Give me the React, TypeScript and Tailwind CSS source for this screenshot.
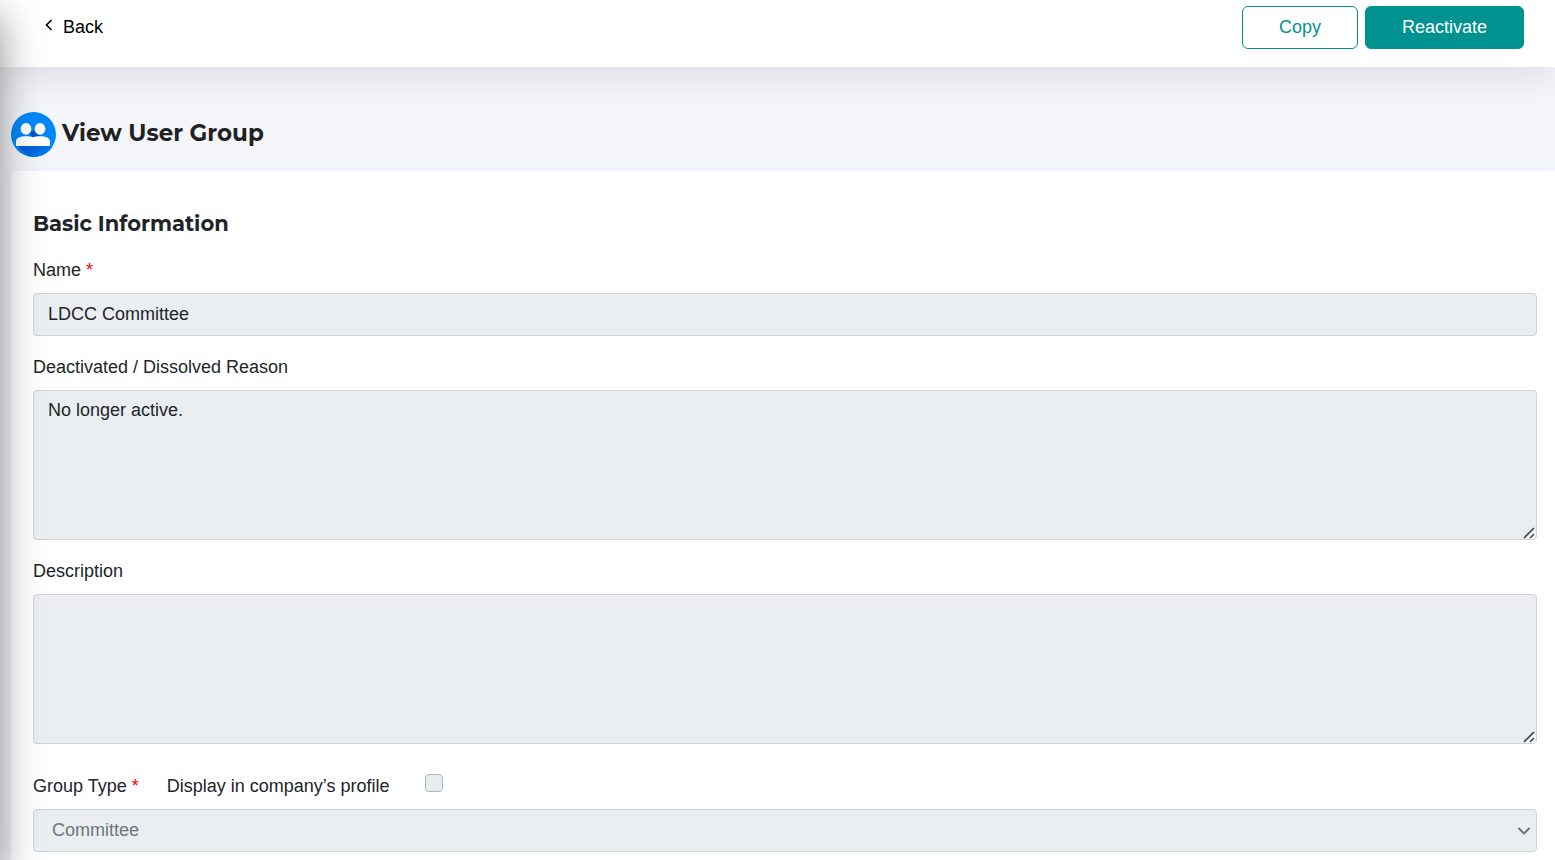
import type { ReactNode } from "react";

interface UserGroup {
  name: string;
  deactivatedReason: string;
  description: string;
  groupType: string;
  displayInProfile: boolean;
}

const group: UserGroup = {
  name: "LDCC Committee",
  deactivatedReason: "No longer active.",
  description: "",
  groupType: "Committee",
  displayInProfile: false,
};

const fieldClass =
  "block w-full rounded-[4px] border border-[#ced4da] bg-[#eaeef1] px-[14px] text-[18px] leading-[27px] text-[#212529] outline-none";

function UserGroupIcon() {
  return (
    <svg viewBox="0 0 45 45" className="size-[45px] shrink-0" aria-hidden="true">
      <defs>
        <clipPath id="badge">
          <circle cx="22.5" cy="22.5" r="22.5" />
        </clipPath>
        <linearGradient id="cast" x1="0" y1="0" x2="1" y2="0.6">
          <stop offset="0" stopColor="#0060d8" />
          <stop offset="0.4" stopColor="#0060d8" />
          <stop offset="1" stopColor="#0088fb" />
        </linearGradient>
      </defs>
      <g clipPath="url(#badge)">
        <rect width="45" height="45" fill="#0088fb" />
        <path d="M5.500 33.500H39l4 4v9H20z" fill="url(#cast)" />
        <path d="M18 21l5.500-3 7 7H21z" fill="#0058cc" />
        <ellipse cx="15" cy="16.800" rx="5.400" ry="5.900" fill="#fff" />
        <ellipse cx="29" cy="16.800" rx="5.400" ry="5.900" fill="#fff" />
        <path
          d="M5 34v-5c0-3 4.500-4.800 10-4.800 3 0 5 .4 7 1 2-.6 4-1 7-1 5.500 0 10 1.800 10 4.800v5z"
          fill="#fff"
        />
      </g>
    </svg>
  );
}

function FieldLabel({
  htmlFor,
  required,
  children,
}: {
  htmlFor: string;
  required?: boolean;
  children: ReactNode;
}) {
  return (
    <label htmlFor={htmlFor} className="block">
      {children}
      {required && <span className="text-[#ff0000]"> *</span>}
    </label>
  );
}

function TextArea({ id, value }: { id: string; value: string }) {
  return (
    <div className="relative">
      <textarea
        id={id}
        readOnly
        value={value}
        className={`${fieldClass} h-[150px] resize-none py-[6px]`}
      />
      <svg
        viewBox="0 0 12 12"
        className="pointer-events-none absolute right-[2px] bottom-[1px] size-3"
        fill="none"
        aria-hidden="true"
      >
        <path d="M2.500 12 12 2.500V12z" fill="#fff" />
        <path d="M1 11 11 1M7 11l4-4" stroke="#444" strokeWidth="1.700" />
      </svg>
    </div>
  );
}

function Header() {
  return (
    <header className="relative flex items-start justify-between bg-white pt-[6px] pr-[31px] pb-[18px] pl-[45px] shadow-[0_10px_40px_rgba(0,0,0,0.10)]">
      <a href="#" className="flex h-[43px] items-center gap-[10px] text-black">
        <svg
          viewBox="0 0 8 12"
          className="mb-[6px] h-3 w-2"
          fill="none"
          stroke="currentColor"
          strokeWidth="1.6"
          aria-hidden="true"
        >
          <path d="M6.500 1 1.500 6l5 5" />
        </svg>
        Back
      </a>
      <div className="flex gap-[7px]">
        <button
          type="button"
          className="h-[43px] rounded-[6px] border border-[#009290] bg-white px-9 text-[#009290]"
        >
          Copy
        </button>
        <button
          type="button"
          className="h-[43px] rounded-[6px] border border-[#009290] bg-[#009290] px-9 text-white"
        >
          Reactivate
        </button>
      </div>
    </header>
  );
}

export default function App() {
  return (
    <div className="relative min-h-screen overflow-hidden bg-[#f5f6fb] font-['Liberation_Sans',Arial,sans-serif] text-[18px] leading-[27px] text-[#212529]">
      {/* collapsed side menu, only its shadow reaches the page */}
      <aside className="pointer-events-none absolute inset-y-0 right-full z-10 w-20 shadow-[0_16px_42px_rgba(0,0,0,0.44)]" />

      <Header />

      <main className="pl-[11px]">
        <div className="relative flex items-start gap-[6px] pt-[45px] pb-[14px]">
          <UserGroupIcon />
          <h1 className="font-['Montserrat','Inter',sans-serif] text-[23px] leading-[42px] font-bold text-[#212121]">
            View User Group
          </h1>
        </div>

        <section className="rounded-tl-[5px] bg-white pt-[39px] pr-[18px] pb-2 pl-[22px] shadow-[0_0_20px_rgba(0,0,0,0.03)]">
          <h2 className="mb-5 font-['Montserrat','Inter',sans-serif] text-[21px] leading-[27px] font-bold">
            Basic Information
          </h2>

          <form className="flex flex-col gap-[18px]">
            <div className="flex flex-col gap-[9px]">
              <FieldLabel htmlFor="name" required>
                Name
              </FieldLabel>
              <input
                id="name"
                type="text"
                readOnly
                value={group.name}
                className={`${fieldClass} h-[43px]`}
              />
            </div>

            <div className="flex flex-col gap-[9px]">
              <FieldLabel htmlFor="reason">Deactivated / Dissolved Reason</FieldLabel>
              <TextArea id="reason" value={group.deactivatedReason} />
            </div>

            <div className="flex flex-col gap-[9px]">
              <FieldLabel htmlFor="description">Description</FieldLabel>
              <TextArea id="description" value={group.description} />
            </div>

            <div className="flex flex-col gap-[9px] pt-[11px]">
              <div className="flex">
                <FieldLabel htmlFor="groupType" required>
                  Group Type
                </FieldLabel>
                <label htmlFor="displayInProfile" className="ml-7">
                  Display in company’s profile
                </label>
                <input
                  id="displayInProfile"
                  type="checkbox"
                  disabled
                  checked={group.displayInProfile}
                  className="mt-px ml-[35px] size-[18px] appearance-none rounded-[4px] border border-[#b0b8c0] bg-[#e9ecef]"
                />
              </div>
              <div className="relative">
                <select
                  id="groupType"
                  disabled
                  value={group.groupType}
                  className="block h-[43px] w-full appearance-none rounded-[4px] border border-[#ced4da] bg-[#eaeef1] px-[18px] text-[18px] text-[#6c757d] opacity-100"
                >
                  <option>Committee</option>
                </select>
                <svg
                  viewBox="0 0 14 14"
                  className="pointer-events-none absolute top-[15px] right-[6px] size-[14px]"
                  fill="none"
                  stroke="#6c757d"
                  strokeWidth="2"
                  strokeLinecap="round"
                  strokeLinejoin="round"
                  aria-hidden="true"
                >
                  <path d="M2 4.500l5 5 5-5" />
                </svg>
              </div>
            </div>
          </form>
        </section>
      </main>
    </div>
  );
}
